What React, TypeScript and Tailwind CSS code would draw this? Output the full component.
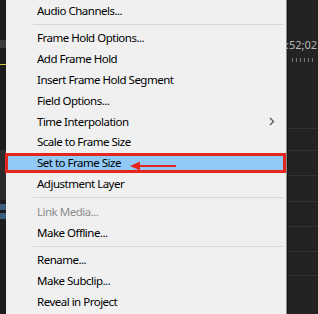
import * as React from 'react';

type Entry = {label?: string; sep?: boolean; disabled?: boolean; sub?: boolean; active?: boolean};

const entries: Entry[] = [
    {label: 'Audio Channels...'},
    {sep: true},
    {label: 'Frame Hold Options...'},
    {label: 'Add Frame Hold'},
    {label: 'Insert Frame Hold Segment'},
    {label: 'Field Options...'},
    {label: 'Time Interpolation', sub: true},
    {label: 'Scale to Frame Size'},
    {label: 'Set to Frame Size', active: true},
    {label: 'Adjustment Layer'},
    {sep: true},
    {label: 'Link Media...', disabled: true},
    {label: 'Make Offline...'},
    {sep: true},
    {label: 'Rename...'},
    {label: 'Make Subclip...'},
    {label: 'Reveal in Project'},
];

const Chevron = () => (
    <svg width="6" height="9" viewBox="0 0 6 9" className="absolute right-[11px] top-[6px]">
        <path d="M1 1 L4.5 4.5 L1 8" fill="none" stroke="#555" strokeWidth="1.3" />
    </svg>
);

const Arrow = () => (
    <svg width="48" height="10" viewBox="0 0 48 10" className="absolute left-[122px] top-[5px]">
        <path d="M8 5 H46" stroke="#e5261f" strokeWidth="2.2" />
        <path d="M0 5 L10 0.5 L10 9.5 Z" fill="#e5261f" />
    </svg>
);

const MenuItem = ({item}: {item: Entry}) => {
    if (item.sep) {
        return (
            <div className="h-[7px] flex items-center pl-[27px] pr-[2px]">
                <div className="h-px w-full bg-[#d7d7d7]" />
            </div>
        );
    }
    if (item.active) {
        return (
            <div className="relative h-[20.8px] -ml-px border-[3px] border-[#e5261f] bg-[#91c9f7] flex items-center pl-[29px]">
                <span className="text-black">{item.label}</span>
                <Arrow />
            </div>
        );
    }
    return (
        <div className="relative h-[20.8px] flex items-center pl-[31px]">
            <span className={item.disabled ? 'text-[#8d8d8d]' : 'text-black'}>{item.label}</span>
            {item.sub && <Chevron />}
        </div>
    );
};

const App = () => {
    return (
        <div
            className="w-[318px] h-[314px] flex bg-[#1c1c1c] overflow-hidden"
            style={{fontFamily: '"Noto Sans", "Open Sans", sans-serif'}}
        >
            {/* timeline bits peeking out on the left */}
            <div className="w-[6px] flex flex-col">
                <div className="h-[40px]" />
                <div className="h-[8px] bg-[#3a3a3a]" />
                <div className="h-[16px]" />
                <div className="h-px bg-[#d8c23a]" />
                <div className="h-[85px]" />
                <div className="h-[50px] bg-[#2c2c2c]" />
                <div className="h-[4px]" />
                <div className="h-[6px] bg-[#3d5d80]" />
                <div className="h-[3px]" />
                <div className="h-[6px] bg-[#3d5d80]" />
            </div>
            <div className="w-[280px] bg-[#f0f0f0] text-[11.5px] tracking-[-0.5px] leading-none flex flex-col">
                {entries.map((item, i) => (
                    <MenuItem key={i} item={item} />
                ))}
            </div>
            <div className="w-px bg-[#8a8a8a]" />
            <div className="flex-1 bg-[#232323] flex flex-col border-l border-[#1a1a1a]">
                <div className="h-[38px]" />
                <div className="text-[11px] leading-[14px] text-[#b9b9b9] -ml-[2px] whitespace-nowrap">:52;02</div>
                <div className="h-[6px]" />
                <div className="flex gap-[3px] pl-[4px]">
                    {[0, 1, 2, 3, 4, 5].map((i) => (
                        <div key={i} className="w-px h-[4px] bg-[#777]" />
                    ))}
                </div>
                <div className="h-[66px]" />
                <div className="h-px bg-[#333]" />
                <div className="h-[21px]" />
                <div className="h-px bg-[#333]" />
                <div className="h-[24px]" />
                <div className="h-px bg-[#333]" />
                <div className="h-[25px]" />
                <div className="h-px bg-[#333]" />
                <div className="h-[24px]" />
                <div className="h-px bg-[#333]" />
                <div className="h-[24px]" />
                <div className="h-px bg-[#333]" />
                <div className="h-[23px]" />
                <div className="h-px bg-[#333]" />
            </div>
        </div>
    );
};

export default App;
